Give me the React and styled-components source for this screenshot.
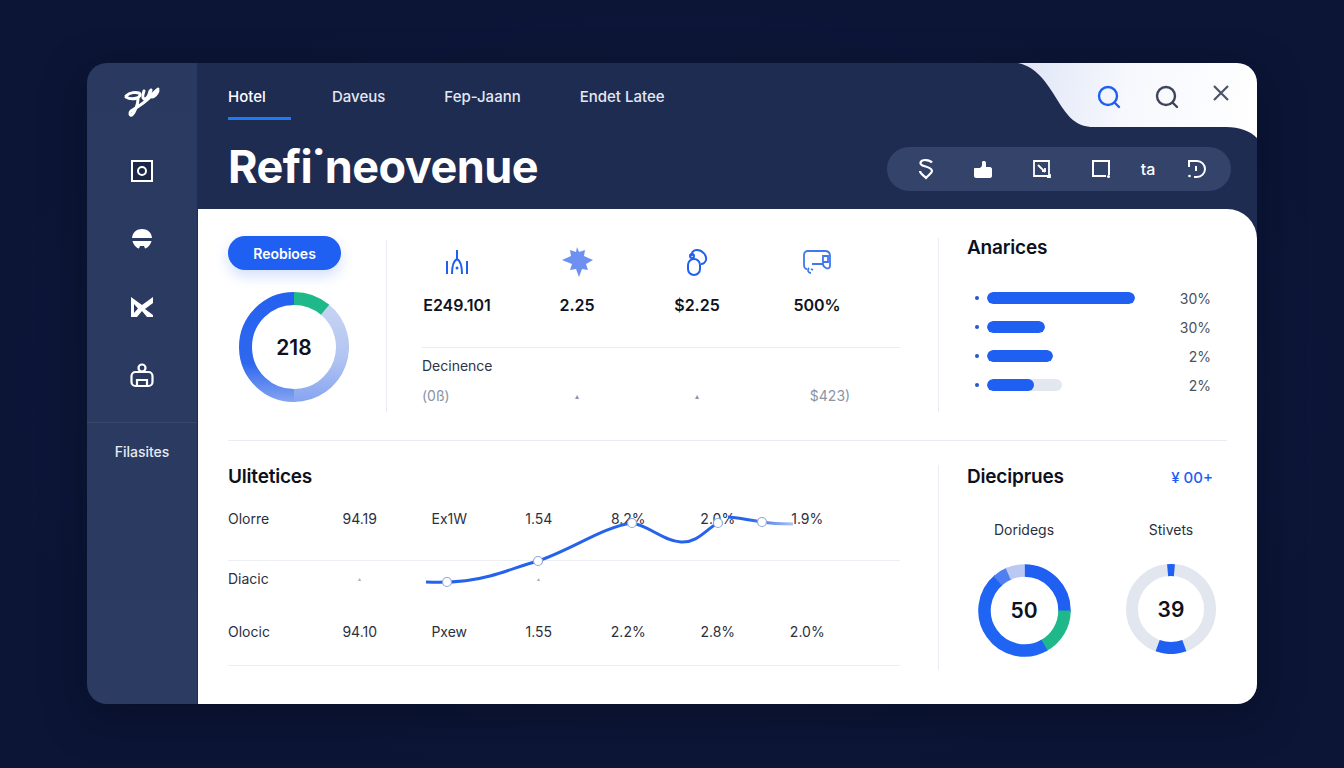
import styled, { createGlobalStyle } from 'styled-components';

const GlobalStyle = createGlobalStyle`
	html, body {
		margin: 0;
		padding: 0;
		background: #0c1536;
	}
	body {
		font-family: Inter, "Liberation Sans", sans-serif;
	}
`;

const Page = styled.div`
	background: radial-gradient(ellipse at center, #121c40 0%, #0c1536 75%);
	box-sizing: border-box;
	height: 768px;
	overflow: hidden;
	padding: 63px 87px 0;
	width: 1344px;
`;
const Window = styled.div`
	border-radius: 20px;
	box-shadow: 0 12px 40px rgba(4, 9, 28, 0.5);
	display: flex;
	height: 641px;
	overflow: hidden;
	width: 1170px;
`;
const Sidebar = styled.aside`
	align-items: center;
	background: linear-gradient(180deg, #2a3960 0%, #2c3b61 100%);
	border-right: 1px solid #1f2c50;
	box-sizing: border-box;
	display: flex;
	flex-direction: column;
	flex-shrink: 0;
	padding-top: 22px;
	width: 111px;
`;
const SideIcon = styled.div`
	align-items: center;
	display: flex;
	height: 36px;
	justify-content: center;
	margin-bottom: 32px;
	width: 40px;
`;
const SideRule = styled.div`
	background: rgba(255, 255, 255, 0.07);
	height: 1px;
	margin-top: -3px;
	width: 100%;
`;
const SideLabel = styled.div`
	color: #e6eaf4;
	font-size: 14px;
	font-weight: 500;
	margin-top: 20px;
`;
const Main = styled.div`
	background: #1f2c51;
	display: flex;
	flex: 1;
	flex-direction: column;
	min-width: 0;
`;
const Header = styled.header`
	height: 146px;
	padding-left: 30px;
	position: relative;
`;
const Tabs = styled.nav`
	display: flex;
	gap: 59px;
	height: 57px;
`;
const Tab = styled.div`
	border-bottom: 3px solid ${p => (p.$active ? '#1f7bf5' : 'transparent')};
	box-sizing: border-box;
	color: ${p => (p.$active ? '#ffffff' : '#e4e8f3')};
	font-size: 15px;
	font-weight: 500;
	height: 57px;
	line-height: 20px;
	padding-top: 24px;
	margin-right: ${p => (p.$active ? '-18px' : '0')};
	min-width: ${p => (p.$active ? '63px' : '0')};
	margin-left: 0;
`;
const Title = styled.h1`
	color: #fff;
	font-size: 45px;
	font-weight: 700;
	letter-spacing: -0.5px;
	line-height: 54px;
	margin: 20px 0 0;
`;
const CornerTab = styled.div`
	align-items: flex-start;
	background: linear-gradient(100deg, #dfe5f6 0%, #f6f8fd 45%, #ffffff 100%);
	clip-path: path('M0 0 L239 0 L239 75 C232 68 222 64 208 64 L76 64 C58 64 50 54 40 38 C28 18 18 4 0 0 Z');
	display: flex;
	gap: 32px;
	height: 75px;
	justify-content: flex-end;
	padding: 21px 27px 0 0;
	box-sizing: border-box;
	position: absolute;
	right: 0;
	top: 0;
	width: 239px;
`;
const ToolPill = styled.div`
	align-items: center;
	background: #34436a;
	border-radius: 22px;
	box-sizing: border-box;
	display: flex;
	height: 44px;
	position: absolute;
	right: 26px;
	top: 84px;
	width: 344px;
`;
const ToolSlot = styled.div`
	align-items: center;
	color: #fff;
	display: flex;
	font-size: 16px;
	font-weight: 500;
	justify-content: center;
	position: absolute;
	left: ${p => p.$x}px;
	transform: translateX(-50%);
`;
const Content = styled.div`
	background: #fff;
	border-top-right-radius: 30px;
	box-sizing: border-box;
	display: flex;
	flex: 1;
	flex-direction: column;
	padding: 0 30px;
`;
const TopRow = styled.section`
	border-bottom: 1px solid #e9ecf2;
	box-sizing: border-box;
	display: flex;
	height: 232px;
	padding-top: 27px;
`;
const BottomRow = styled.section`
	display: flex;
	flex: 1;
	padding-top: 24px;
`;
const LeftCol = styled.div`
	flex-shrink: 0;
	width: 158px;
`;
const PrimaryButton = styled.button`
	background: #1f5ff2;
	border: 0;
	border-radius: 17px;
	box-shadow: 0 6px 14px rgba(31, 95, 242, 0.2);
	color: #fff;
	display: block;
	font-family: inherit;
	font-size: 14px;
	font-weight: 600;
	height: 34px;
	padding: 0;
	width: 113px;
`;
const DonutHolder = styled.div`
	height: ${p => p.$size}px;
	margin: ${p => p.$margin || '0'};
	position: relative;
	width: ${p => p.$size}px;
`;
const DonutValue = styled.div`
	align-items: center;
	color: #0e1220;
	display: flex;
	font-size: ${p => p.$fs || 21}px;
	font-weight: 600;
	inset: 0;
	justify-content: center;
	position: absolute;
`;
const VRule = styled.div`
	background: #e9ecf2;
	flex-shrink: 0;
	height: ${p => p.$h}px;
	margin-top: ${p => p.$mt}px;
	width: 1px;
`;
const MidCol = styled.div`
	flex-shrink: 0;
	margin-left: 10px;
	width: 503px;
`;
const StatGrid = styled.div`
	display: grid;
	grid-template-columns: repeat(4, 120px);
	height: 111px;
`;
const Stat = styled.div`
	align-items: center;
	display: flex;
	flex-direction: column;
`;
const StatIcon = styled.div`
	align-items: center;
	display: flex;
	height: 30px;
	justify-content: center;
	margin-top: 11px;
`;
const StatValue = styled.div`
	color: #10131f;
	font-size: 16px;
	font-weight: 600;
	margin-top: 18px;
`;
const HRule = styled.div`
	background: #e9ecf2;
	height: 1px;
	margin-left: 25px;
`;
const DetailLabel = styled.div`
	color: #2e3444;
	font-size: 14px;
	line-height: 18px;
	margin: 9px 0 0 25px;
`;
const DetailGrid = styled.div`
	color: #8d93a3;
	display: grid;
	font-size: 14px;
	grid-template-columns: repeat(4, 120px);
	line-height: 18px;
	margin-top: 12px;
`;
const DetailCell = styled.div`
	padding-left: ${p => p.$pl || 0}px;
	text-align: ${p => p.$align || 'center'};
	font-size: ${p => p.$fs || 14}px;
`;
const RightCol = styled.div`
	flex: 1;
	margin-left: 28px;
	min-width: 0;
`;
const PanelTitle = styled.h2`
	color: #0d111d;
	font-size: 19px;
	font-weight: 600;
	letter-spacing: -0.2px;
	line-height: 24px;
	margin: 0;
`;
const BarList = styled.div`
	display: flex;
	flex-direction: column;
	gap: 17px;
	margin-top: 32px;
	padding: 0 16px 0 8px;
`;
const BarRow = styled.div`
	align-items: center;
	display: flex;
	height: 12px;
`;
const BarDot = styled.span`
	background: #2557c8;
	border-radius: 50%;
	height: 4px;
	margin-right: 8px;
	width: 4px;
`;
const BarTrack = styled.div`
	background: #e3e7f0;
	border-radius: 6px;
	height: 12px;
	overflow: hidden;
	width: ${p => p.$width}px;
`;
const BarFill = styled.div`
	background: #1f5ff2;
	border-radius: 6px;
	height: 100%;
	width: ${p => p.$width}px;
`;
const BarPct = styled.span`
	color: #4c5260;
	font-size: 14px;
	margin-left: auto;
`;
const TableCol = styled.div`
	flex-shrink: 0;
	width: 672px;
`;
const Table = styled.div`
	margin-top: 10px;
	position: relative;
`;
const TableRow = styled.div`
	align-items: center;
	border-bottom: ${p => (p.$line ? '1px solid #eceef3' : '0')};
	color: #2b303e;
	display: grid;
	font-size: 14px;
	grid-template-columns: 87px repeat(6, 89.5px);
	height: 40px;
	margin-bottom: ${p => p.$mb || 0}px;
	padding-bottom: ${p => p.$pb || 0}px;
`;
const TableCell = styled.div`
	color: ${p => (p.$muted ? '#a8adb9' : 'inherit')};
	font-size: ${p => p.$fs || 14}px;
	text-align: ${p => (p.$first ? 'left' : 'center')};
`;
const ChartOverlay = styled.svg`
	left: 0;
	overflow: visible;
	pointer-events: none;
	position: absolute;
	top: 0;
`;
const PanelHead = styled.div`
	align-items: center;
	display: flex;
	justify-content: space-between;
	padding-right: 14px;
`;
const LinkText = styled.span`
	color: #1f5ff2;
	font-size: 15px;
	font-weight: 500;
`;
const DonutCols = styled.div`
	display: flex;
	gap: 45px;
	margin-top: 32px;
`;
const DonutCol = styled.div`
	align-items: center;
	display: flex;
	flex-direction: column;
	width: ${p => p.$w}px;
`;
const DonutLabel = styled.div`
	color: #2b303e;
	font-size: 14px;
	line-height: 18px;
	margin-bottom: 25px;
`;

const polar = (c, r, deg) => {
	const a = ((deg - 90) * Math.PI) / 180;
	return [c + r * Math.cos(a), c + r * Math.sin(a)];
};
const arc = (c, r, from, to) => {
	const [x1, y1] = polar(c, r, from);
	const [x2, y2] = polar(c, r, to);
	return `M${x1} ${y1} A${r} ${r} 0 ${to - from > 180 ? 1 : 0} 1 ${x2} ${y2}`;
};

const Logo = () => (
	<svg width='40' height='36' viewBox='0 0 40 36' fill='none' stroke='#fff' strokeWidth='3' strokeLinecap='round'>
		<path d='M4 11c4-4 10-4 13-3 2 1 1 4-2 5-3 1-8 1-11-1' />
		<path d='M16 14c0 5-3 13-6 16-2 1-3-2-1-4 5-3 15-9 20-15 3-3 5-6 7-7' />
		<path d='M22 6c-1 3-2 7 0 8 3 0 5-4 6-8M29 5c-1 3-1 7 1 7 2 0 5-3 6-6' />
	</svg>
);
const FrameIcon = () => (
	<svg width='24' height='24' viewBox='0 0 24 24' fill='none'>
		<rect x='2' y='2' width='20' height='20' fill='#1b2747' stroke='#fff' strokeWidth='2' />
		<circle cx='12' cy='12' r='4' stroke='#fff' strokeWidth='2' />
	</svg>
);
const DomeIcon = () => (
	<svg width='24' height='24' viewBox='0 0 24 24' fill='#fff'>
		<path d='M2 11C2.5 5 7 2 12 2s9.500 3 10 9Z' />
		<path d='M2.500 14h19c-1 4-4 7-6.500 7.500l-1-2.500h-4l-1 2.500C6.500 21 3.500 18 2.500 14Z' />
	</svg>
);
const MailIcon = () => (
	<svg width='24' height='24' viewBox='0 0 24 24' fill='#fff'>
		<path d='M1 2l11 8 11-8v6l-8 6 8 6v2h-6l-5-6-5 6H1V2Zm3 7v9l4-4.500Z' fillRule='evenodd' />
	</svg>
);
const LockIcon = () => (
	<svg width='26' height='26' viewBox='0 0 26 26' fill='none' stroke='#fff' strokeWidth='2.200'>
		<circle cx='13' cy='6' r='3.500' />
		<rect x='2.500' y='10' width='21' height='14' rx='4' />
		<path d='M8 24v-6h10v6' />
	</svg>
);
const SearchIcon = ({ color }) => (
	<svg width='26' height='26' viewBox='0 0 26 26' fill='none' stroke={color} strokeWidth='2.400' strokeLinecap='round'>
		<circle cx='12' cy='12' r='9' />
		<path d='M18.500 18.500L23 23' />
	</svg>
);
const CloseIcon = () => (
	<svg width='18' height='18' viewBox='0 0 18 18' fill='none' stroke='#4a5468' strokeWidth='2.200'>
		<path d='M2 2l14 14M16 2L2 16' />
	</svg>
);
const DollarIcon = () => (
	<svg width='16' height='22' viewBox='0 0 16 22' fill='none' stroke='#fff' strokeWidth='2.200'>
		<path d='M14 4.500C12 2 4 0.500 2.500 4.500 1 9 14 8 14 13c0 2-3 3.500-6 7-3-3-6-4.500-6-7' />
	</svg>
);
const ThumbIcon = () => (
	<svg width='18' height='18' viewBox='0 0 18 18' fill='#fff'>
		<path d='M1 8h5l2-2V2.500C8 .5 12 .5 12 3v4h4c1 0 2 1 2 2v7c0 1-1 2-2 2H2c-1 0-2-1-2-2V9c0-.5.500-1 1-1Z' />
	</svg>
);
const SlashBoxIcon = () => (
	<svg width='18' height='18' viewBox='0 0 18 18' fill='none' stroke='#fff' strokeWidth='1.800'>
		<path d='M1 1h15v15H1Z' />
		<path d='M5 5l7 7M9 11h3v-3' />
		<path d='M14 17h3v-3' />
	</svg>
);
const SquareDotIcon = () => (
	<svg width='20' height='20' viewBox='0 0 20 20' fill='none' stroke='#fff' strokeWidth='2'>
		<path d='M18 16V2H2v15h13' />
		<circle cx='17.500' cy='17.500' r='1.500' fill='#fff' stroke='none' />
	</svg>
);
const ChatIcon = () => (
	<svg width='20' height='20' viewBox='0 0 20 20' fill='none' stroke='#fff' strokeWidth='2'>
		<path d='M2 8V2h8a8 8 0 0 1 0 16H7' />
		<path d='M9 7v5' />
		<circle cx='2.500' cy='17' r='1.300' fill='#fff' stroke='none' />
	</svg>
);
const TreeIcon = () => (
	<svg width='24' height='26' viewBox='0 0 24 26' fill='none' stroke='#1f5ff2' strokeWidth='2'>
		<path d='M2 12v13M22 12v13M12 1v9M12 10c-4 2-5 8-5 15M12 10c4 2 5 8 5 15' />
		<circle cx='12' cy='19' r='1.500' fill='#1f5ff2' stroke='none' />
	</svg>
);
const BurstIcon = () => (
	<svg width='32' height='30' viewBox='0 0 32 30' fill='#6d90f1'>
		<path d='M16 0l2 5 6-2-1 6 9 4-7 4 2 6-6-1-3 8-3-8-6 1 2-6-10-4 9-4-1-6 6 2Z' />
	</svg>
);
const TagIcon = () => (
	<svg width='22' height='28' viewBox='0 0 22 28' fill='none' stroke='#1f5ff2' strokeWidth='2'>
		<rect x='2' y='11' width='12' height='16' rx='6' />
		<path d='M6 8c-1-3 1-6 5-6 5 0 10 5 9 10-1 3-3 4-5 4' />
		<circle cx='6' cy='8' r='2' />
	</svg>
);
const BusIcon = () => (
	<svg width='28' height='26' viewBox='0 0 28 26' fill='none' stroke='#3f78ee' strokeWidth='1.800'>
		<path d='M4 20c-2 0-3-2-3-4V6c0-3 2-4 4-4h17c3 0 5 2 5 5v10c0 2-2 3-4 2-2-1-3-2-3-4H9' />
		<path d='M20 7h5v6h-5ZM8 24c-3 0-4-3-2-5M8 20l2 1' />
	</svg>
);

const MainDonut = () => (
	<svg width='110' height='110' viewBox='0 0 110 110' fill='none' strokeWidth='13'>
		<defs>
			<linearGradient id='ringLeft' gradientUnits='userSpaceOnUse' x1='0' y1='0' x2='0' y2='110'>
				<stop offset='0' stopColor='#2461f0' />
				<stop offset='0.65' stopColor='#2f68ee' />
				<stop offset='1' stopColor='#86a4f0' />
			</linearGradient>
			<linearGradient id='ringRight' gradientUnits='userSpaceOnUse' x1='0' y1='0' x2='0' y2='110'>
				<stop offset='0' stopColor='#ccd8f3' />
				<stop offset='0.6' stopColor='#b2c4f1' />
				<stop offset='1' stopColor='#86a4f0' />
			</linearGradient>
		</defs>
		<path d={arc(55, 48.5, 178, 360)} stroke='url(#ringLeft)' />
		<path d={arc(55, 48.5, 40, 180)} stroke='url(#ringRight)' />
		<path d={arc(55, 48.5, 0, 40)} stroke='#1fb88a' />
	</svg>
);
const MixDonut = () => (
	<svg width='93' height='93' viewBox='0 0 93 93' fill='none' strokeWidth='12.500'>
		<path d={arc(46.5, 40, 0, 92)} stroke='#1f5ff2' />
		<path d={arc(46.5, 40, 90, 152)} stroke='#1fb88a' />
		<path d={arc(46.5, 40, 150, 320)} stroke='#1f64f2' />
		<path d={arc(46.5, 40, 318, 338)} stroke='#4f7ff0' />
		<path d={arc(46.5, 40, 336, 360)} stroke='#b9c9f2' />
	</svg>
);
const GapDonut = () => (
	<svg width='90' height='90' viewBox='0 0 90 90' fill='none' strokeWidth='12'>
		<circle cx='45' cy='45' r='39' stroke='#e2e6ef' />
		<path d={arc(45, 39, 355, 360)} stroke='#1f5ff2' />
		<path d={arc(45, 39, 0, 5)} stroke='#1f5ff2' />
		<path d={arc(45, 39, 160, 200)} stroke='#1f5ff2' />
	</svg>
);

const linePoints = [
	[219, 83],
	[310, 62],
	[404, 24],
	[490, 24],
	[534, 23],
];

const TrendLine = () => (
	<ChartOverlay width='672' height='170' viewBox='0 0 672 170' fill='none'>
		<defs>
			<linearGradient id='lineFade' gradientUnits='userSpaceOnUse' x1='520' y1='0' x2='565' y2='0'>
				<stop offset='0' stopColor='#2563eb' />
				<stop offset='1' stopColor='#a9c2f6' />
			</linearGradient>
		</defs>
		<path
			d='M198 83 C220 84 240 83 262 77 C280 72 295 66 310 62 C345 50 375 28 404 24 C420 26 435 42 453 43 C470 44 478 30 490 24'
			stroke='#2563eb'
			strokeWidth='3'
		/>
		<path d='M500 18 C512 19 522 21 534 23 C545 25 555 25 565 25' stroke='url(#lineFade)' strokeWidth='3' />
		{linePoints.map(([x, y]) => (
			<circle key={x} cx={x} cy={y} r='4.500' fill='#fff' stroke='#8fa8d8' strokeWidth='1.200' />
		))}
	</ChartOverlay>
);

const tools = [
	{ x: 39, icon: <DollarIcon /> },
	{ x: 96, icon: <ThumbIcon /> },
	{ x: 155, icon: <SlashBoxIcon /> },
	{ x: 214, icon: <SquareDotIcon /> },
	{ x: 261, icon: 'ta' },
	{ x: 310, icon: <ChatIcon /> },
];
const stats = [
	{ icon: <TreeIcon />, value: 'E249.101' },
	{ icon: <BurstIcon />, value: '2.25' },
	{ icon: <TagIcon />, value: '$2.25' },
	{ icon: <BusIcon />, value: '500%' },
];
const bars = [
	{ track: 148, fill: 148, pct: '30%' },
	{ track: 58, fill: 58, pct: '30%' },
	{ track: 66, fill: 66, pct: '2%' },
	{ track: 75, fill: 47, pct: '2%' },
];

const App = () => (
	<>
		<GlobalStyle />
		<Page>
			<Window>
				<Sidebar>
					<SideIcon><Logo /></SideIcon>
					<SideIcon><FrameIcon /></SideIcon>
					<SideIcon><DomeIcon /></SideIcon>
					<SideIcon><MailIcon /></SideIcon>
					<SideIcon><LockIcon /></SideIcon>
					<SideRule />
					<SideLabel>Filasites</SideLabel>
				</Sidebar>
				<Main>
					<Header>
						<Tabs>
							<Tab $active>Hotel</Tab>
							<Tab>Daveus</Tab>
							<Tab>Fep-Jaann</Tab>
							<Tab>Endet Latee</Tab>
						</Tabs>
						<Title>Refi˙neovenue</Title>
						<CornerTab>
							<SearchIcon color='#1f5ff2' />
							<SearchIcon color='#3c4658' />
							<CloseIcon />
						</CornerTab>
						<ToolPill>
							{tools.map(t => (
								<ToolSlot key={t.x} $x={t.x}>{t.icon}</ToolSlot>
							))}
						</ToolPill>
					</Header>
					<Content>
						<TopRow>
							<LeftCol>
								<PrimaryButton>Reobioes</PrimaryButton>
								<DonutHolder $size={110} $margin='22px 0 0 11px'>
									<MainDonut />
									<DonutValue>218</DonutValue>
								</DonutHolder>
							</LeftCol>
							<VRule $h={172} $mt={4} />
							<MidCol>
								<StatGrid>
									{stats.map(s => (
										<Stat key={s.value}>
											<StatIcon>{s.icon}</StatIcon>
											<StatValue>{s.value}</StatValue>
										</Stat>
									))}
								</StatGrid>
								<HRule />
								<DetailLabel>Decinence</DetailLabel>
								<DetailGrid>
									<DetailCell $align='left' $pl={25}>(0ß)</DetailCell>
									<DetailCell $fs={8}>▴</DetailCell>
									<DetailCell $fs={8}>▴</DetailCell>
									<DetailCell $pl={26}>$423)</DetailCell>
								</DetailGrid>
							</MidCol>
							<VRule $h={174} $mt={2} style={{ marginLeft: 38 }} />
							<RightCol>
								<PanelTitle>Anarices</PanelTitle>
								<BarList>
									{bars.map((b, i) => (
										<BarRow key={i}>
											<BarDot />
											<BarTrack $width={b.track}>
												<BarFill $width={b.fill} />
											</BarTrack>
											<BarPct>{b.pct}</BarPct>
										</BarRow>
									))}
								</BarList>
							</RightCol>
						</TopRow>
						<BottomRow>
							<TableCol>
								<PanelTitle>Ulitetices</PanelTitle>
								<Table>
									<TableRow $pb={22} style={{ height: 62, boxSizing: 'border-box' }} $line>
										<TableCell $first>Olorre</TableCell>
										<TableCell>94.19</TableCell>
										<TableCell>Ex1W</TableCell>
										<TableCell>1.54</TableCell>
										<TableCell>8.2%</TableCell>
										<TableCell>2.0%</TableCell>
										<TableCell>1.9%</TableCell>
									</TableRow>
									<TableRow style={{ height: 34 }} $mb={17}>
										<TableCell $first>Diacic</TableCell>
										<TableCell $muted $fs={6}>▴</TableCell>
										<TableCell />
										<TableCell $muted $fs={6}>▴</TableCell>
									</TableRow>
									<TableRow $pb={14} style={{ height: 54, boxSizing: 'border-box' }} $line>
										<TableCell $first>Olocic</TableCell>
										<TableCell>94.10</TableCell>
										<TableCell>Pxew</TableCell>
										<TableCell>1.55</TableCell>
										<TableCell>2.2%</TableCell>
										<TableCell>2.8%</TableCell>
										<TableCell>2.0%</TableCell>
									</TableRow>
									<TrendLine />
								</Table>
							</TableCol>
							<VRule $h={205} $mt={0} style={{ marginLeft: 38 }} />
							<RightCol>
								<PanelHead>
									<PanelTitle>Dieciprues</PanelTitle>
									<LinkText>¥ 00+</LinkText>
								</PanelHead>
								<DonutCols>
									<DonutCol $w={114}>
										<DonutLabel>Doridegs</DonutLabel>
										<DonutHolder $size={93}>
											<MixDonut />
											<DonutValue>50</DonutValue>
										</DonutHolder>
									</DonutCol>
									<DonutCol $w={90}>
										<DonutLabel>Stivets</DonutLabel>
										<DonutHolder $size={90}>
											<GapDonut />
											<DonutValue>39</DonutValue>
										</DonutHolder>
									</DonutCol>
								</DonutCols>
							</RightCol>
						</BottomRow>
					</Content>
				</Main>
			</Window>
		</Page>
	</>
);

export default App;
